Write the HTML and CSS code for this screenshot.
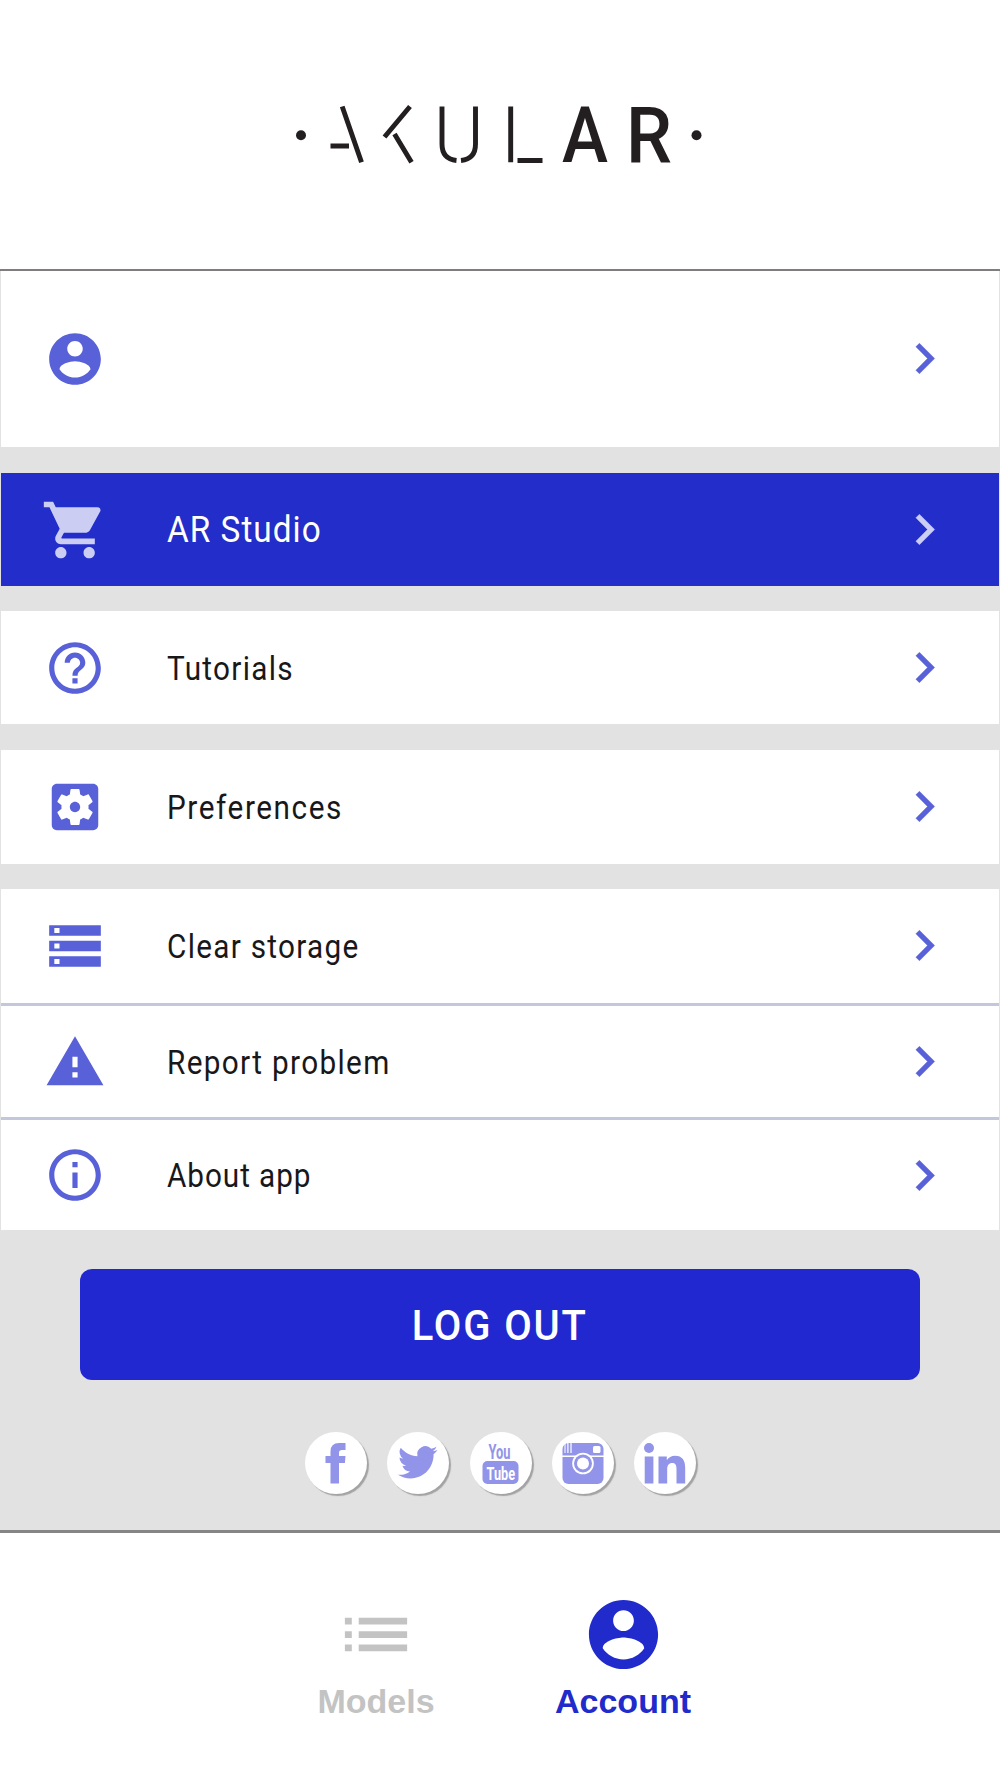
FILE: index.html
```html
<!DOCTYPE html>
<html lang="en">
<head>
<meta charset="utf-8">
<title>AkulAR – Account</title>
<link rel="stylesheet" href="styles.css">
</head>
<body>
<svg class="defs" width="0" height="0" aria-hidden="true">
  <symbol id="chevron" viewBox="0 0 24 24"><path d="M10 6 8.59 7.41 13.17 12l-4.58 4.59L10 18l6-6z"/></symbol>
  <symbol id="person" viewBox="0 0 24 24"><path d="M12 2C6.48 2 2 6.48 2 12s4.48 10 10 10 10-4.480 10-10S17.520 2 12 2zm0 3c1.660 0 3 1.340 3 3s-1.340 3-3 3-3-1.340-3-3 1.340-3 3-3zm0 14.200c-2.500 0-4.710-1.280-6-3.220.030-1.990 4-3.080 6-3.080 1.990 0 5.970 1.090 6 3.080-1.290 1.940-3.500 3.220-6 3.220z"/></symbol>
</svg>
<div class="app">
  <header class="header">
    <svg class="logo" viewBox="0 0 440 90" role="img" aria-label="AkulAR">
      <circle cx="21" cy="45.300" r="5"/>
      <circle cx="416.500" cy="45.300" r="5"/>
      <g class="stencil">
        <path d="M62.200 16.500 81.500 72.300M50.500 56H69"/>
        <path d="M130 16.500 104.500 47M114.500 44 131.500 72.300"/>
        <path d="M162 16.500V54Q162 69 176.500 70.500M195.500 16.500V54Q195.500 69 181 70.500"/>
        <path d="M230.700 16.500V72.300M237.500 70.500H262.500"/>
      </g>
      <text class="logo-text" x="282" y="72.300" textLength="46" lengthAdjust="spacingAndGlyphs">A</text>
      <text class="logo-text" x="346" y="72.300" textLength="46" lengthAdjust="spacingAndGlyphs">R</text>
    </svg>
  </header>

  <main class="menu">
    <a class="row row-profile">
      <svg class="icon"><use href="#person"/></svg><span class="label"></span>
      <svg class="chevron"><use href="#chevron"/></svg>
    </a>
    <a class="row row-studio">
      <svg class="icon" viewBox="0 0 24 24"><path d="M7 18c-1.100 0-1.990.9-1.990 2S5.900 22 7 22s2-.9 2-2-.9-2-2-2zM1 2v2h2l3.600 7.590-1.350 2.450c-.16.280-.25.610-.25.960 0 1.100.9 2 2 2h12v-2H7.420c-.14 0-.25-.11-.25-.25l.03-.12.900-1.630h7.450c.75 0 1.410-.41 1.750-1.030l3.580-6.490c.08-.14.120-.31.120-.48 0-.55-.45-1-1-1H5.210l-.94-2H1zm16 16c-1.100 0-1.990.9-1.990 2s.89 2 1.990 2 2-.9 2-2-.9-2-2-2z"/></svg>
      <span class="label"><span class="studio">AR Studio</span></span>
      <svg class="chevron"><use href="#chevron"/></svg>
    </a>
    <a class="row">
      <svg class="icon" viewBox="0 0 24 24"><path d="M11 18h2v-2h-2v2zm1-16C6.480 2 2 6.480 2 12s4.480 10 10 10 10-4.480 10-10S17.520 2 12 2zm0 18c-4.410 0-8-3.590-8-8s3.590-8 8-8 8 3.590 8 8-3.590 8-8 8zm0-14c-2.210 0-4 1.790-4 4h2c0-1.100.9-2 2-2s2 .9 2 2c0 2-3 1.750-3 5h2c0-2.250 3-2.500 3-5 0-2.210-1.790-4-4-4z"/></svg>
      <span class="label"><span class="tutorials">Tutorials</span></span>
      <svg class="chevron"><use href="#chevron"/></svg>
    </a>
    <a class="row row-preferences">
      <svg class="icon" viewBox="0 0 24 24"><path d="M12 10c-1.100 0-2 .9-2 2s.9 2 2 2 2-.9 2-2-.9-2-2-2zm7-7H5c-1.110 0-2 .9-2 2v14c0 1.100.89 2 2 2h14c1.110 0 2-.9 2-2V5c0-1.100-.89-2-2-2zm-1.750 9c0 .23-.02.460-.05.680l1.480 1.160c.13.110.17.300.080.450l-1.400 2.420c-.09.150-.27.210-.43.150l-1.740-.7c-.36.280-.76.510-1.180.690l-.26 1.850c-.03.170-.18.300-.35.300h-2.800c-.17 0-.32-.13-.35-.29l-.26-1.850c-.43-.18-.82-.41-1.180-.69l-1.740.7c-.16.060-.34 0-.43-.15l-1.400-2.420c-.09-.15-.05-.34.080-.45l1.480-1.160c-.03-.23-.05-.46-.05-.69 0-.23.020-.46.050-.68l-1.480-1.160c-.13-.11-.17-.3-.08-.45l1.400-2.420c.09-.15.270-.21.430-.15l1.740.7c.36-.28.760-.51 1.180-.69l.26-1.850c.03-.17.180-.3.350-.3h2.800c.17 0 .32.130.35.290l.26 1.850c.43.180.82.410 1.180.690l1.740-.7c.16-.06.340 0 .43.150l1.400 2.420c.09.150.050.340-.08.450l-1.480 1.160c.03.230.050.460.050.690z"/></svg>
      <span class="label"><span class="preferences">Preferences</span></span>
      <svg class="chevron"><use href="#chevron"/></svg>
    </a>
    <div class="group">
      <a class="row row-storage">
        <svg class="icon" viewBox="0 0 24 24"><path d="M2 20h20v-4H2v4zm2-3h2v2H4v-2zM2 4v4h20V4H2zm4 3H4V5h2v2zm-4 7h20v-4H2v4zm2-3h2v2H4v-2z"/></svg>
        <span class="label"><span>Clear storage</span></span>
        <svg class="chevron"><use href="#chevron"/></svg>
      </a>
      <a class="row row-report">
        <svg class="icon" viewBox="0 0 24 24"><path d="M1 21h22L12 2 1 21zm12-3h-2v-2h2v2zm0-4h-2v-4h2v4z"/></svg>
        <span class="label"><span class="report">Report problem</span></span>
        <svg class="chevron"><use href="#chevron"/></svg>
      </a>
      <a class="row row-about">
        <svg class="icon" viewBox="0 0 24 24"><path d="M11 7h2v2h-2zm0 4h2v6h-2zm1-9C6.480 2 2 6.480 2 12s4.480 10 10 10 10-4.480 10-10S17.520 2 12 2zm0 18c-4.410 0-8-3.590-8-8s3.590-8 8-8 8 3.590 8 8-3.590 8-8 8z"/></svg>
        <span class="label"><span class="about">About app</span></span>
        <svg class="chevron"><use href="#chevron"/></svg>
      </a>
    </div>

    <button class="logout"><span>LOG OUT</span></button>

    <div class="social">
      <a class="bubble" aria-label="Facebook"><svg viewBox="0 0 62 62"><path d="M25.500 51.500V31h-5v-7h5v-4.500Q25.500 11 34 11h6.500v7H37Q34 18 34 20.500V24h6.500l-.6 7H34v20.500z"/></svg></a>
      <a class="bubble" aria-label="Twitter"><svg viewBox="0 0 62 62"><path transform="translate(11 10.500) scale(1.650)" d="M23.950 4.570a10 10 0 0 1-2.820.770 4.960 4.960 0 0 0 2.160-2.720c-.95.550-2 .95-3.130 1.180a4.920 4.920 0 0 0-8.380 4.480C7.690 8.090 4.070 6.130 1.640 3.160a4.920 4.920 0 0 0 1.520 6.570 4.900 4.900 0 0 1-2.230-.61v.06a4.920 4.920 0 0 0 3.950 4.830 5 5 0 0 1-2.210.080 4.940 4.940 0 0 0 4.600 3.420A9.870 9.870 0 0 1 0 19.540a14 14 0 0 0 7.550 2.210c9.050 0 14-7.500 14-13.980 0-.21 0-.42-.02-.63a9.940 9.940 0 0 0 2.420-2.570z"/></svg></a>
      <a class="bubble" aria-label="YouTube"><svg viewBox="0 0 62 62"><text class="yt" x="18.500" y="26.500" textLength="22" lengthAdjust="spacingAndGlyphs">You</text><rect x="12.500" y="29" width="36" height="23" rx="5"/><text class="yt tube" x="16.500" y="48.300" textLength="28.500" lengthAdjust="spacingAndGlyphs">Tube</text></svg></a>
      <a class="bubble" aria-label="Instagram"><svg viewBox="0 0 62 62"><rect x="10.500" y="11" width="41" height="41" rx="6"/><g class="cut"><path d="M12.500 10h1v11h-1zM15.300 10h1.200v11h-1.200zM18.400 10h1.200v11h-1.200zM10 23.500h42v1.500H10z"/><rect x="41" y="14" width="7.500" height="7" rx="1.500"/><circle cx="31" cy="31.500" r="10.800"/></g><circle cx="31" cy="31.500" r="9"/><circle class="cut" cx="31" cy="31.500" r="6"/></svg></a>
      <a class="bubble" aria-label="LinkedIn"><svg viewBox="0 0 62 62"><g transform="translate(-.8)"><circle cx="15.800" cy="16" r="5"/><path d="M11.500 24.500h8.700v27h-8.700zM25.300 24.500h8.300v3.700q2.800-4.500 8.200-4.500c7.300 0 10.200 4.800 10.200 12v15.800h-8.700V37.200c0-3.800-.8-6.200-4.200-6.200-3.600 0-5.100 2.500-5.100 6.200v14.300h-8.700z"/></g></svg></a>
    </div>
  </main>

  <nav class="tabs">
    <a class="tab">
      <svg class="tab-icon" viewBox="0 0 84 84"><path d="M10 25h7v7h-7zM24 25h49v7H24zM10 38.600h7v7h-7zM24 38.600h49v7H24zM10 52h7v7h-7zM24 52h49v7H24z"/></svg>
      <span>Models</span>
    </a>
    <a class="tab active">
      <svg class="tab-icon"><use href="#person"/></svg>
      <span>Account</span>
    </a>
  </nav>
</div>
</body>
</html>
```
FILE: styles.css
```css
* { box-sizing: border-box; }
body { margin: 0; background: #fff; font-family: Roboto, "Liberation Sans", sans-serif; }
svg { display: block; fill: currentColor; }
.defs { position: absolute; }
.app { width: 1000px; height: 1778px; display: flex; flex-direction: column; }

.header { height: 271px; flex: none; padding-top: 90px; border-bottom: 2px solid #807d7e; }
.logo { width: 440px; height: 90px; margin: 0 auto; color: #231f20; }
.stencil { fill: none; stroke: currentColor; stroke-width: 4.900; }
.logo-text { font: 500 77px Roboto, sans-serif; }

.menu { height: 1262px; flex: none; background: #e2e2e2; border-bottom: 3px solid #858585; padding: 0 1px; display: flex; flex-direction: column; }
.row { height: 113px; flex: none; margin-bottom: 25px; padding: 0 44px 0 43px; display: flex; align-items: center; background: #fff; color: #5861d8; }
.row-profile { height: 176px; margin-bottom: 26px; padding-bottom: 1px; }
.row-studio { background: #222dca; color: #cccdf3; }
.row:nth-child(3) { margin-bottom: 26px; }
.row-preferences { height: 114px; padding-bottom: 1px; }
.icon { width: 62px; height: 62px; flex: none; }
.row-studio .icon { width: 68px; height: 68px; margin: 0 -3px 0 -3px; }
.chevron { width: 61px; height: 61px; flex: none; stroke: currentColor; stroke-width: .15; }
.label { flex: 1; padding: 2px 0 0 61px; font-size: 33px; line-height: 40px; color: #18181a; white-space: nowrap; }
.label span { display: inline-block; transform: scaleX(.9); transform-origin: 0 50%; letter-spacing: 1.450px; }
.label .studio { color: #fff; font-size: 37px; letter-spacing: 1.150px; }
.label .preferences { letter-spacing: 1.750px; }
.label .report { letter-spacing: 1.500px; }
.label .about { letter-spacing: 1.050px; }
.group { margin-bottom: 39px; }
.group .row { margin: 0; }
.row-report, .row-about { border-top: 3px solid #c3c7dc; }
.group .row-storage { height: 114px; padding-bottom: 1px; }
.group .row-report { height: 114px; }
.group .row-about { height: 113px; }

.logout { width: 840px; height: 111px; flex: none; margin: 0 auto 52px; padding: 0; border: 0; border-radius: 12px; background: #2128d0; color: #fff; font: 500 43px Roboto, sans-serif; letter-spacing: 2px; }
.logout span { display: inline-block; transform: scaleX(.93); }
.social { display: flex; justify-content: center; gap: 20.400px; padding-left: 1px; }
.bubble { width: 62px; height: 62px; border-radius: 50%; background: #fff; color: #9194e8; box-shadow: 2px 2px 1px #a3a3a3; }
.bubble svg { width: 62px; height: 62px; }
.yt { font: 700 20px/1 Roboto, sans-serif; }
.tube { font-size: 18px; }
.tube, .cut { fill: #fff; }

.tabs { flex: 1; display: flex; justify-content: center; padding-top: 60px; gap: 107px; }
.tab { width: 140px; display: flex; flex-direction: column; align-items: center; color: #c3c3c3; font: 700 34px/40px "Liberation Sans", Arial, sans-serif; }
.tab:first-child { margin-left: -1px; }
.tab-icon { width: 83px; height: 83px; margin-bottom: 5px; }
.active { color: #212acb; }
```
